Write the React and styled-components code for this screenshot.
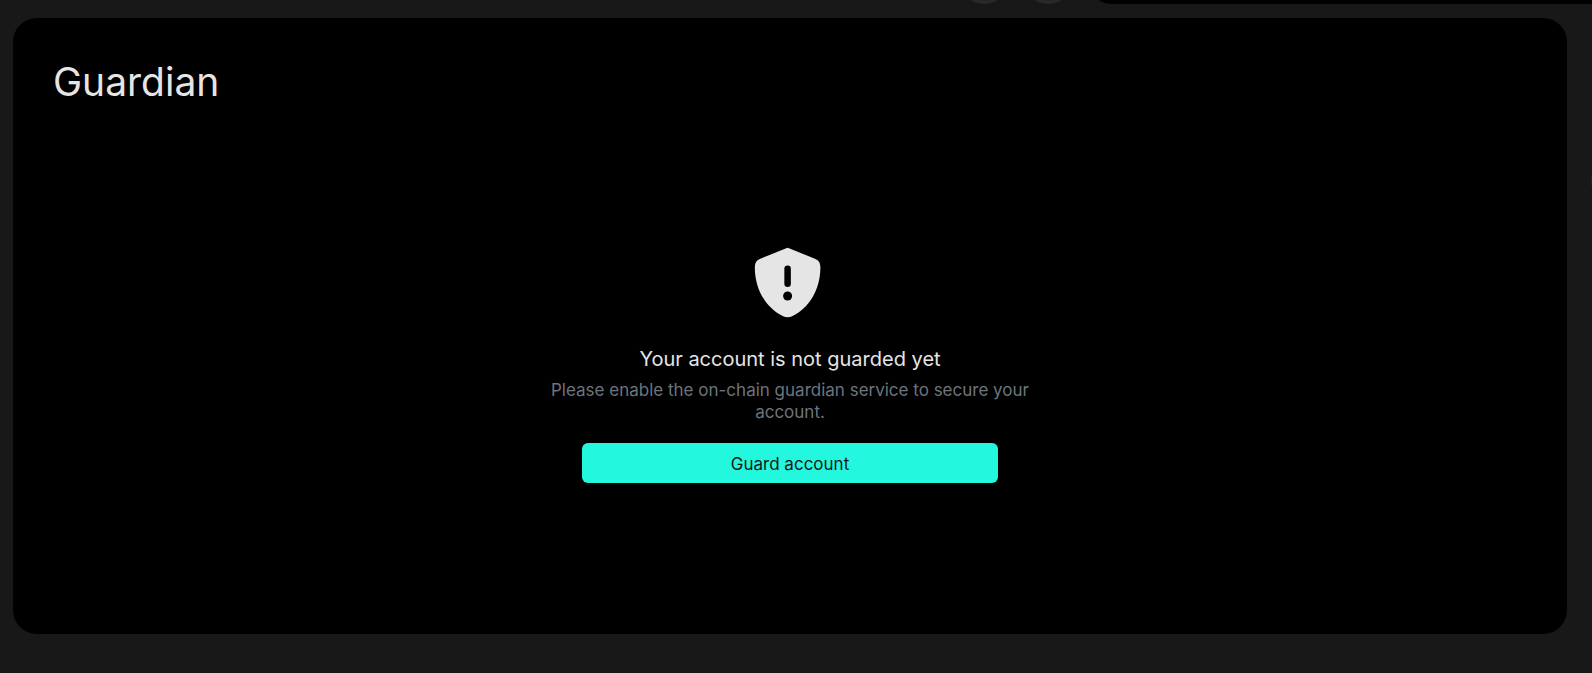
import React from "react";
import styled, { createGlobalStyle } from "styled-components";

const GlobalStyle = createGlobalStyle`
  *, *::before, *::after { box-sizing: border-box; }
  body {
    margin: 0;
    background: #181818;
    color: #e5e5e5;
    font-family: Inter, "Liberation Sans", sans-serif;
  }
`;

const Page = styled.div`
  display: flex;
  flex-direction: column;
  gap: 14px;
  min-height: 100vh;
  overflow: hidden;
`;

const TopBar = styled.header`
  display: flex;
  justify-content: flex-end;
  align-items: flex-end;
  gap: 16px;
  height: 4px;
  overflow: hidden;
`;

const RoundSlot = styled.div`
  flex: none;
  width: 48px;
  height: 48px;
  border-radius: 50%;
  background: #282828;
`;

const AccountSlot = styled.div`
  flex: none;
  width: 504px;
  height: 48px;
  border-radius: 24px 0 0 24px;
  background: #000;
`;

/* Collapsed tab peeking in at the window's right edge */
const EdgeTab = styled.div`
  position: fixed;
  top: 176px;
  right: 0;
  width: 1px;
  height: 10px;
  background: #1c1a4d;
`;

const Card = styled.main`
  flex: 1;
  display: flex;
  flex-direction: column;
  margin: 0 25px 39px 13px;
  padding: 40px;
  border-radius: 24px;
  background: #000;
`;

const Title = styled.h1`
  margin: 0;
  font-size: 39px;
  line-height: 48px;
  font-weight: 400;
`;

const EmptyState = styled.section`
  flex: 1;
  display: flex;
  flex-direction: column;
  align-items: center;
  padding-top: 124px;
  text-align: center;
`;

const ShieldIcon = styled.svg`
  width: 80px;
  height: 96px;
`;

const Heading = styled.h2`
  margin: 17px 0 0;
  font-size: 20px;
  line-height: 32px;
  font-weight: 400;
`;

const Description = styled.p`
  max-width: 488px;
  margin: 4px 0 0;
  font-size: 17px;
  line-height: 22px;
  color: #6c757d;
`;

const PrimaryButton = styled.button`
  width: 100%;
  max-width: 416px;
  height: 40px;
  margin-top: 20px;
  padding: 2px 16px 0;
  border: 0;
  border-radius: 6px;
  background: #23f7dd;
  color: #171717;
  font: inherit;
  font-size: 17px;
  cursor: pointer;
`;

export default function App() {
  return (
    <Page>
      <GlobalStyle />
      <TopBar>
        <RoundSlot />
        <RoundSlot />
        <AccountSlot />
      </TopBar>
      <Card>
        <Title>Guardian</Title>
        <EmptyState>
          <ShieldIcon viewBox="0 0 80 96" aria-hidden="true">
            <path
              fill="#e5e5e5"
              d="M36.2 18.2Q37.6 17.4 39 18.2L65.500 29Q70.400 31.200 70.400 37C70.400 61 58 78.500 42.600 86Q37.600 88.600 32.600 86C17.200 78.500 4.800 61 4.800 37Q4.800 31.200 9.700 29Z"
            />
            <path d="M37.600 38.800V53.800" stroke="#000" strokeWidth="6.500" strokeLinecap="round" />
            <circle cx="37.600" cy="66" r="4.500" fill="#000" />
          </ShieldIcon>
          <Heading>Your account is not guarded yet</Heading>
          <Description>
            Please enable the on-chain guardian service to secure your account.
          </Description>
          <PrimaryButton type="button">Guard account</PrimaryButton>
        </EmptyState>
      </Card>
      <EdgeTab />
    </Page>
  );
}
